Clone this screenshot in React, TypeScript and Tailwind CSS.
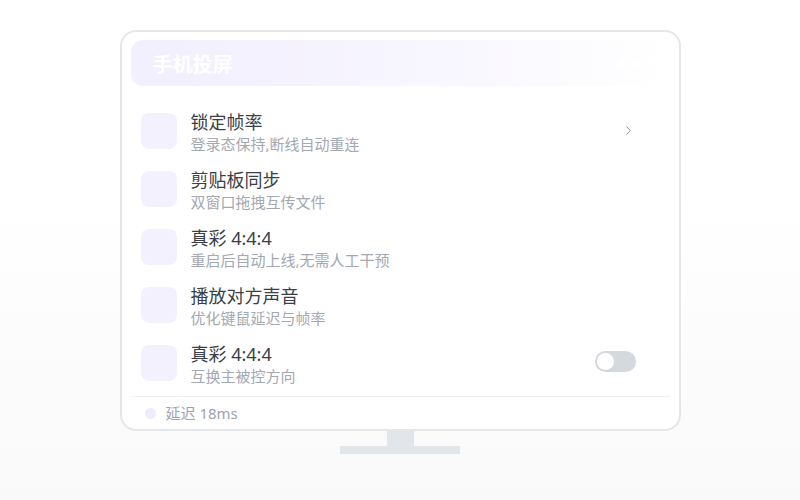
import { ChevronRight } from 'lucide-react';

const rows = [
  { title: '锁定帧率', desc: '登录态保持,断线自动重连', trail: 'chevron' },
  { title: '剪贴板同步', desc: '双窗口拖拽互传文件' },
  { title: '真彩 4:4:4', desc: '重启后自动上线,无需人工干预' },
  { title: '播放对方声音', desc: '优化键鼠延迟与帧率' },
  { title: '真彩 4:4:4', desc: '互换主被控方向', trail: 'toggle' },
];

const Row = ({ title, desc, trail }: { title: string; desc: string; trail?: string }) => (
  <div className="flex items-center h-[58px] pl-[10px] pr-[34px]">
    <div className="w-[36px] h-[36px] rounded-lg bg-[#f3f1fd] shrink-0" />
    <div className="ml-[14px] flex-1 flex flex-col pt-[3px]">
      <div className="text-[18px] leading-[22px] text-[#3a3f47]">{title}</div>
      <div className="text-[15px] leading-[22px] text-[#a3a8b1]">{desc}</div>
    </div>
    {trail === 'chevron' && <ChevronRight className="w-[15px] h-[15px] text-[#8f959e] mb-[2px]" strokeWidth={1.6} />}
    {trail === 'toggle' && (
      <div className="w-[41px] h-[21px] rounded-full bg-[#d5d8de] p-[2px] flex items-center mb-[3px]">
        <div className="w-[17px] h-[17px] rounded-full bg-white" />
      </div>
    )}
  </div>
);

export default function App() {
  return (
    <div
      className="w-[800px] h-[500px] bg-gradient-to-b from-white from-40% to-[#f9f9fa] flex flex-col items-center pt-[30px]"
      style={{ fontFamily: '"Noto Sans", "Noto Sans CJK SC", sans-serif' }}
    >
      <div className="w-[561px] h-[401px] rounded-2xl border-2 border-[#e4e6ea] bg-white pt-[8px] px-[9px] flex flex-col">
        <div className="h-[46px] shrink-0 rounded-xl bg-gradient-to-r from-[#f2effe] via-[#f7f5fe] to-white flex items-center justify-between px-[22px]">
          <span className="text-[20px] font-bold text-white pt-[3px]">手机投屏</span>
          <div className="flex items-center gap-[6px] mr-[-4px]">
            <div className="w-[7px] h-[7px] rounded-full bg-white" />
            <div className="w-[7px] h-[7px] rounded-full bg-white" />
            <div className="w-[7px] h-[7px] rounded-full bg-white" />
          </div>
        </div>
        <div className="mt-[16px] flex flex-col">
          {rows.map((r, i) => (
            <Row key={i} {...r} />
          ))}
        </div>
        <div className="mt-[4px] border-t border-[#eef0f3] h-[33px] flex items-center pl-[14px]">
          <div className="w-[11px] h-[11px] rounded-full bg-[#efecfd]" />
          <span className="ml-[10px] text-[15px] text-[#9ca3af]">延迟 18ms</span>
        </div>
      </div>
      <div className="w-[27px] h-[15px] bg-[#e2e5e9]" />
      <div className="w-[120px] h-[8px] bg-[#e2e5e9]" />
    </div>
  );
}
